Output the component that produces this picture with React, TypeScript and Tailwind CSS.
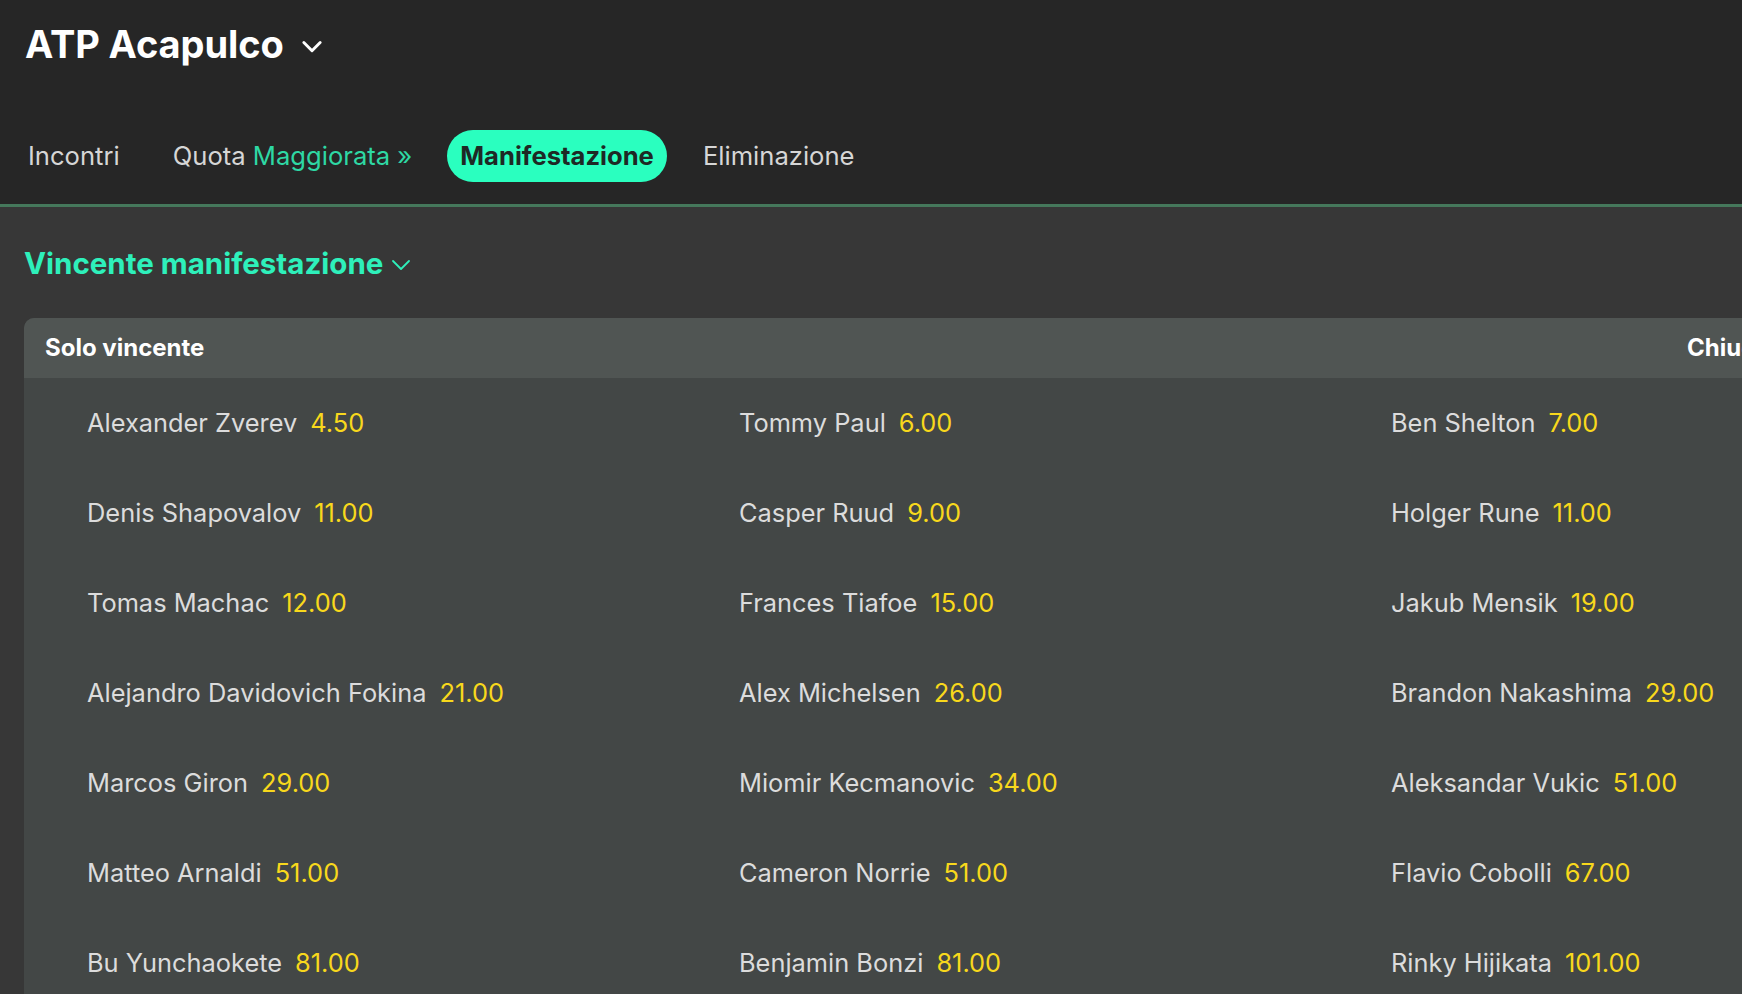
import React from "react";

const rows: [string, string][][] = [
  [["Alexander Zverev", "4.50"], ["Tommy Paul", "6.00"], ["Ben Shelton", "7.00"]],
  [["Denis Shapovalov", "11.00"], ["Casper Ruud", "9.00"], ["Holger Rune", "11.00"]],
  [["Tomas Machac", "12.00"], ["Frances Tiafoe", "15.00"], ["Jakub Mensik", "19.00"]],
  [["Alejandro Davidovich Fokina", "21.00"], ["Alex Michelsen", "26.00"], ["Brandon Nakashima", "29.00"]],
  [["Marcos Giron", "29.00"], ["Miomir Kecmanovic", "34.00"], ["Aleksandar Vukic", "51.00"]],
  [["Matteo Arnaldi", "51.00"], ["Cameron Norrie", "51.00"], ["Flavio Cobolli", "67.00"]],
  [["Bu Yunchaokete", "81.00"], ["Benjamin Bonzi", "81.00"], ["Rinky Hijikata", "101.00"]],
];

export default function App() {
  return (
    <div className="w-[1742px] h-[994px] overflow-hidden bg-[#373737] font-['Inter',sans-serif]">
      {/* top bar */}
      <div className="h-[204px] bg-[#262626] flex flex-col">
        <div className="h-[88px] flex items-center pl-[25px] gap-[14px]">
          <h1 className="text-white text-[38px] font-bold tracking-[-0.1px]">ATP Acapulco</h1>
          <svg viewBox="0 0 24 24" className="w-[28px] h-[28px] mt-[4px]" fill="none" stroke="white" strokeWidth="2.5" strokeLinecap="round" strokeLinejoin="round">
            <path d="M5 9l7 7 7-7" />
          </svg>
        </div>
        <div className="mt-[42px] h-[52px] flex items-center text-[25.6px] text-[#d6d6d6]">
          <span className="ml-[28px]">Incontri</span>
          <span className="ml-[53px]">
            Quota <span className="text-[#2ed8a4]">Maggiorata »</span>
          </span>
          <span className="ml-[35px] h-[52px] px-[13px] rounded-full bg-[#2affbf] text-[#1e2925] font-bold flex items-center">Manifestazione</span>
          <span className="ml-[36px]">Eliminazione</span>
        </div>
      </div>
      <div className="h-[3px] bg-[#45785b]" />

      {/* content */}
      <div className="pl-[24px]">
        <div className="mt-[36px] h-[40px] flex items-center gap-[6px]">
          <h2 className="text-[29.5px] font-bold text-[#2ef0bb]">Vincente manifestazione</h2>
          <svg viewBox="0 0 24 24" className="w-[24px] h-[24px] mt-[4px]" fill="none" stroke="#2ef0bb" strokeWidth="1.8" strokeLinecap="round" strokeLinejoin="round">
            <path d="M4 8l8 8 8-8" />
          </svg>
        </div>

        <div className="mt-[35px] w-[1990px] rounded-t-[10px] overflow-hidden bg-[#434746]">
          <div className="h-[60px] bg-[#505553] flex items-center pl-[21px] text-white text-[24px] font-bold">
            <span className="w-[1642px]">Solo vincente</span>
            <span>Chiudi</span>
          </div>
          <div className="grid grid-cols-[652px_652px_652px]">
            {rows.flat().map(([name, odd]) => (
              <div key={name} className="h-[90px] flex items-center pl-[63px] text-[25.4px] gap-[13px]">
                <span className="text-[#dcdcdc]">{name}</span>
                <span className="text-[#f8d81c]">{odd}</span>
              </div>
            ))}
          </div>
        </div>
      </div>
    </div>
  );
}
